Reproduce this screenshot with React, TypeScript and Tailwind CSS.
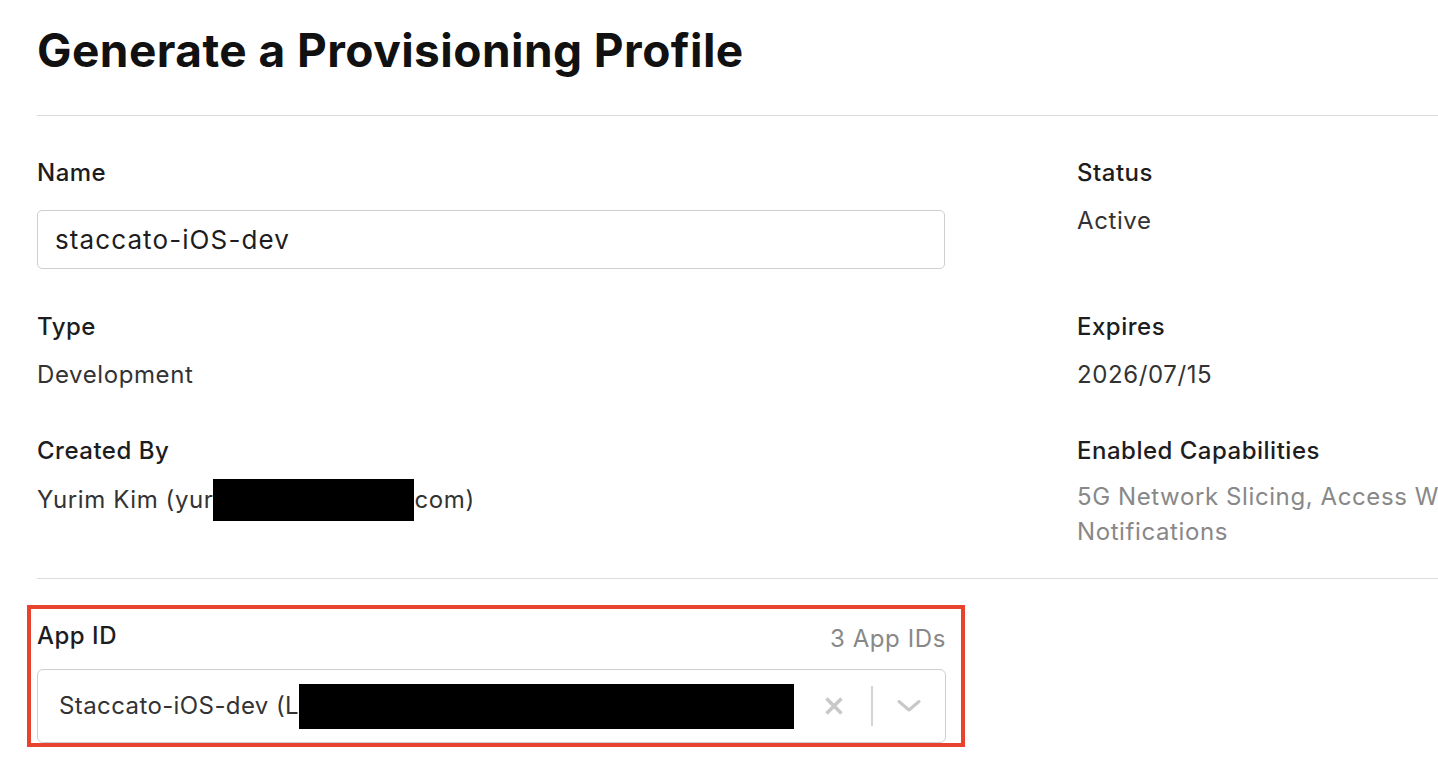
const font = { fontFamily: 'Inter, "Noto Sans", sans-serif' }

function Field({ label, children }: { label: string; children: React.ReactNode }) {
  return (
    <div className="flex flex-col">
      <div className="text-[24px] leading-[28px] font-medium tracking-[0.5px] text-[#1d1d1f]">{label}</div>
      {children}
    </div>
  )
}

const value = 'text-[24px] leading-[28px] tracking-[0.6px] text-[#333]'

export default function App() {
  return (
    <div className="w-[1438px] h-[776px] overflow-hidden bg-white" style={font}>
      <div className="pl-[37px] w-[1800px]">
        <h1 className="pt-[24px] text-[46px] leading-[52px] font-bold text-[#111] tracking-[0.45px]">
          Generate a Provisioning Profile
        </h1>
        <div className="mt-[39px] h-px bg-[#dcdcdc]" />

        <div className="flex pt-[43px]">
          <div className="w-[1040px] shrink-0">
            <div className="w-[908px]">
              <Field label="Name">
                <div className="mt-[23px] h-[59px] rounded-[5px] border border-[#cfcfcf] flex items-center pl-[17px] text-[26px] tracking-[1.1px] text-[#1d1d1f]">
                  staccato-iOS-dev
                </div>
              </Field>
              <div className="mt-[44px]">
                <Field label="Type">
                  <div className={`mt-[20px] ${value}`}>Development</div>
                </Field>
              </div>
              <div className="mt-[48px]">
                <Field label="Created By">
                  <div className={`mt-[14px] flex items-center ${value}`}>
                    <span>Yurim Kim (yur</span>
                    <span className="inline-block w-[201px] h-[42px] bg-black" />
                    <span>com)</span>
                  </div>
                </Field>
              </div>
            </div>
          </div>

          <div className="w-[680px] shrink-0">
            <Field label="Status">
              <div className={`mt-[20px] ${value}`}>Active</div>
            </Field>
            <div className="mt-[78px]">
              <Field label="Expires">
                <div className={`mt-[20px] ${value}`}>2026/07/15</div>
              </Field>
            </div>
            <div className="mt-[48px]">
              <Field label="Enabled Capabilities">
                <div className="mt-[14px] w-[640px] text-[24px] leading-[35px] tracking-[0.6px] text-[#888]">
                  5G Network Slicing, Access WiFi Information, Push Notifications
                </div>
              </Field>
            </div>
          </div>
        </div>

        <div className="mt-[29px] h-px bg-[#dcdcdc]" />

        <div className="mt-[26px] -ml-[10px] w-[938px] border-[4px] border-[#e8432e] pl-[6px] pr-[15px] pt-[13px]">
          <div className="flex items-end justify-between">
            <div className="text-[24px] leading-[28px] font-medium tracking-[0.5px] text-[#1d1d1f]">App ID</div>
            <div className="text-[24px] leading-[28px] tracking-[0.6px] text-[#888] translate-y-[3px]">3 App IDs</div>
          </div>
          <div className="mt-[19px] h-[74px] rounded-[6px] border border-[#cfcfcf] flex items-center pl-[21px] pr-[24px]">
            <div className="flex items-center flex-1 text-[24px] tracking-[0.4px] text-[#333]">
              <span>Staccato-iOS-dev (L</span>
              <span className="inline-block w-[495px] h-[45px] bg-black" />
            </div>
            <svg width="20" height="20" viewBox="0 0 20 20" className="shrink-0">
              <path d="M2.5 2.5 L17.5 17.5 M17.5 2.5 L2.5 17.5" stroke="#c8c8c8" strokeWidth="3.5" />
            </svg>
            <div className="ml-[27px] mr-[24px] w-[2px] h-[40px] bg-[#d4d4d4]" />
            <svg width="24" height="14" viewBox="0 0 24 14" className="shrink-0">
              <path d="M2 2.5 L12 11 L22 2.5" fill="none" stroke="#c8c8c8" strokeWidth="3" strokeLinecap="round" strokeLinejoin="round" />
            </svg>
          </div>
        </div>
      </div>
    </div>
  )
}
